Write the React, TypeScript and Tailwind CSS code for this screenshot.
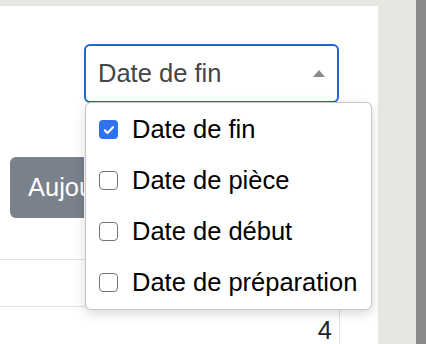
import { useState } from 'react';

const OPTIONS = ['Date de fin', 'Date de pièce', 'Date de début', 'Date de préparation'];

function CheckBox({ checked }: { checked: boolean }) {
  if (checked) {
    return (
      <span className="flex h-[19px] w-[19px] shrink-0 items-center justify-center rounded-[4px] bg-[#2f72f0]">
        <svg viewBox="0 0 16 16" className="h-[14px] w-[14px]" fill="none">
          <path d="M3.2 8.4l3 3 6.4-6.6" stroke="white" strokeWidth="2.4" strokeLinecap="round" strokeLinejoin="round" />
        </svg>
      </span>
    );
  }
  return <span className="h-[19px] w-[19px] shrink-0 rounded-[4px] border-[1.5px] border-[#767676] bg-white" />;
}

export default function App() {
  const [selected, setSelected] = useState('Date de fin');

  return (
    <div
      className="flex h-[344px] w-full overflow-hidden bg-[#e8e6e1] text-[25.5px]"
      style={{ fontFamily: '"Liberation Sans", Arial, sans-serif' }}
    >
      <div className="relative mt-[6px] w-[378px] shrink-0 bg-white">
        <div className="ml-[84px] mt-[38px] flex h-[59px] w-[255px] items-center justify-between rounded-[6px] border-2 border-[#2563d8] pl-[12px] pr-[12px] text-[#454545]">
          <span>{selected}</span>
          <svg viewBox="0 0 12 7" className="h-[7px] w-[12px]">
            <path d="M6 0L12 7H0z" fill="#8a8a8a" />
          </svg>
        </div>

        <div className="ml-[10px] mt-[54px] flex h-[61px] w-[74px] items-center overflow-hidden whitespace-nowrap rounded-l-[6px] bg-[#7a818c] pl-[18px] text-white">
          Aujourd'hui
        </div>

        <div className="mt-[41px] w-[340px] border-t border-[#e2e2e2]" />
        <div className="mt-[46px] flex w-[340px] border-t border-[#e2e2e2]">
          <div className="flex h-[38px] flex-1 items-center justify-end border-r border-[#e2e2e2] pr-[7px] pt-[9px] text-[#222]">
            4
          </div>
        </div>

        <div className="absolute left-[85px] top-[96px] w-[287px] rounded-[6px] border border-[#c4c4c4] bg-white py-[1px] text-black shadow-[0_4px_12px_rgba(0,0,0,0.15)]">
          {OPTIONS.map((opt) => (
            <div
              key={opt}
              onClick={() => setSelected(opt)}
              className="flex h-[51px] cursor-pointer items-center gap-[14px] pl-[13px]"
            >
              <CheckBox checked={opt === selected} />
              <span>{opt}</span>
            </div>
          ))}
        </div>
      </div>
      <div className="flex-1" />
      <div className="w-[10px] shrink-0 bg-[#8a8a8a]" />
    </div>
  );
}
